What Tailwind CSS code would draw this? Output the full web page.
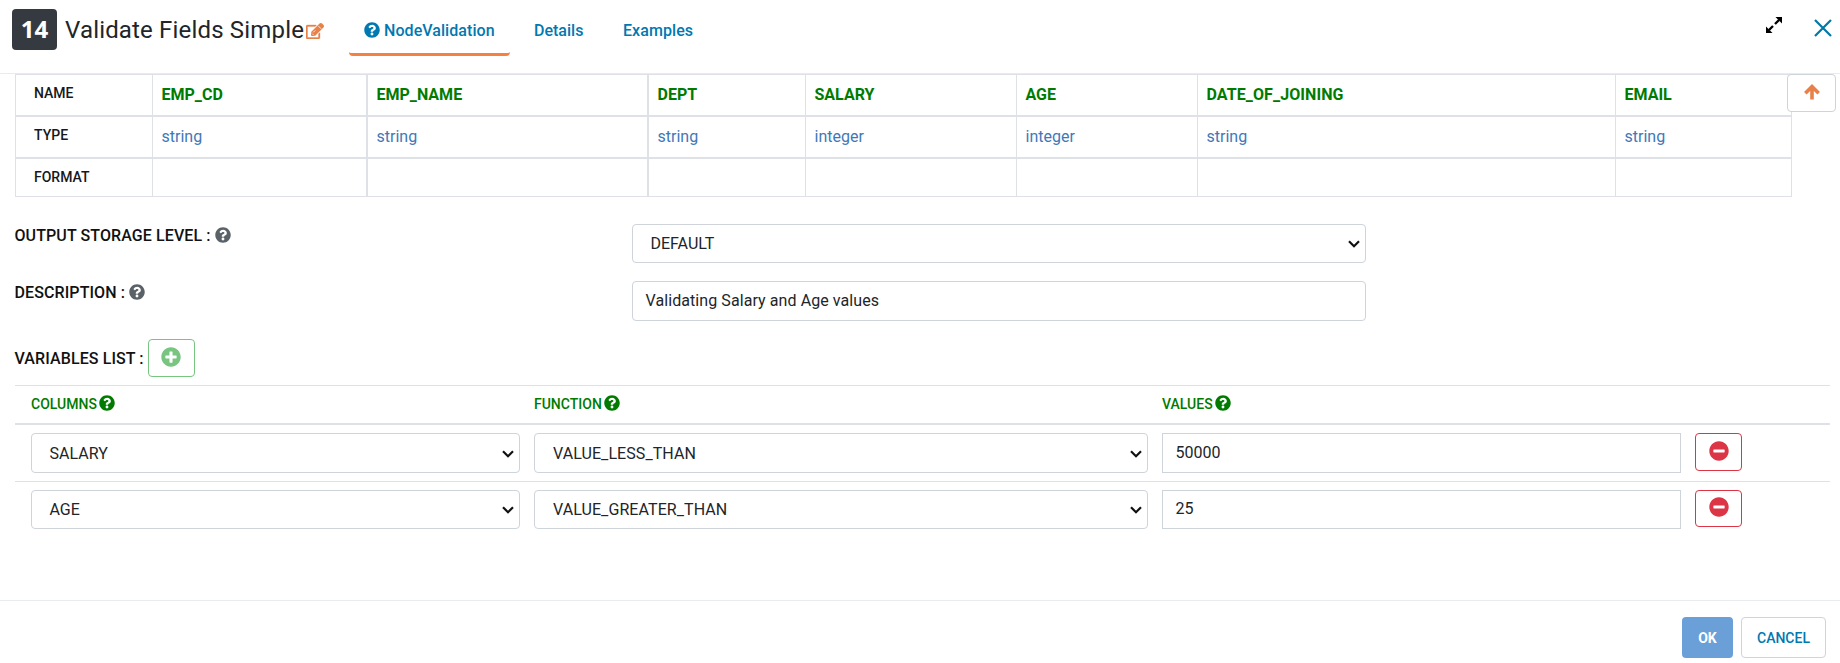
<!DOCTYPE html>
<html lang="en">
<head>
<meta charset="utf-8">
<title>Validate Fields Simple</title>
<script src="https://cdn.jsdelivr.net/npm/@tailwindcss/browser@4"></script>
</head>
<body class="h-[663px] w-[1840px] overflow-hidden bg-white font-[Roboto,sans-serif] text-base text-[#212529]">
<svg class="hidden">
  <symbol id="help" viewBox="0 0 512 512"><path fill="currentColor" d="M504 256c0 137-111 248-248 248S8 393 8 256 119 8 256 8s248 111 248 248zM262.700 90c-54.500 0-89.300 23-116.500 63.800-3.500 5.300-2.400 12.400 2.700 16.300l34.700 26.300c5.200 3.900 12.600 3 16.700-2.100 17.900-22.700 30.100-35.800 57.300-35.800 20.400 0 45.700 13.100 45.700 33 0 15-12.400 22.700-32.500 34C247.100 238.500 216 254.900 216 296v4c0 6.600 5.400 12 12 12h56c6.600 0 12-5.400 12-12v-1.300c0-28.500 83.200-29.600 83.200-106.700 0-58-60.200-102-116.500-102zM256 338c-25.400 0-46 20.600-46 46s20.600 46 46 46 46-20.600 46-46-20.600-46-46-46z"/></symbol>
  <symbol id="minus" viewBox="0 0 512 512"><path fill="currentColor" d="M256 8C119 8 8 119 8 256s111 248 248 248 248-111 248-248S393 8 256 8zM124 296c-6.600 0-12-5.400-12-12v-56c0-6.600 5.400-12 12-12h264c6.600 0 12 5.400 12 12v56c0 6.600-5.400 12-12 12H124z"/></symbol>
  <symbol id="plus" viewBox="0 0 512 512"><path fill="currentColor" d="M256 8C119 8 8 119 8 256s111 248 248 248 248-111 248-248S393 8 256 8zm144 276c0 6.600-5.400 12-12 12h-92v92c0 6.600-5.400 12-12 12h-56c-6.600 0-12-5.400-12-12v-92h-92c-6.600 0-12-5.400-12-12v-56c0-6.600 5.400-12 12-12h92v-92c0-6.600 5.400-12 12-12h56c6.600 0 12 5.400 12 12v92h92c6.600 0 12 5.400 12 12v56z"/></symbol>
  <symbol id="chev" viewBox="0 0 12 8"><path d="M1 1.200 6 6.200 11 1.200" fill="none" stroke="#111" stroke-width="2.200"/></symbol>
</svg>

<header class="flex h-[74px] items-start border-b border-[#e9ecef]">
  <div class="mt-[9px] ml-3 flex h-[41px] w-[45px] items-center justify-center rounded bg-[#343a40] pb-0.5 font-['Open_Sans',sans-serif] text-2xl font-bold text-white">14</div>
  <h1 class="mt-3 ml-2 w-[241px] text-2xl leading-[37px] whitespace-nowrap tracking-[0.17px]">Validate Fields Simple</h1>
  <svg class="mt-[23px] h-4 w-[18px] text-[#e8804a]" viewBox="0 0 576 512"><path fill="currentColor" stroke="currentColor" stroke-width="12" d="M402.300 344.900l32-32c5-5 13.700-1.500 13.700 5.700V464c0 26.500-21.500 48-48 48H48c-26.500 0-48-21.500-48-48V112c0-26.500 21.500-48 48-48h273.500c7.100 0 10.700 8.600 5.700 13.700l-32 32c-1.500 1.500-3.500 2.300-5.700 2.300H48v352h352V350.500c0-2.100.8-4.100 2.300-5.600z"/><path fill="currentColor" d="M558.900 143.100L296.300 405.700l-90.400 10c-26.200 2.900-48.500-19.200-45.600-45.600l10-90.400L432.900 17.100c22.900-22.900 59.900-22.900 82.700 0l43.200 43.200c22.900 22.900 22.900 60 .1 82.800z"/><path d="M392 92l92 92M232 300l62-62M200 340l36 36" stroke="#fff" stroke-width="26"/></svg>
  <nav class="ml-[25px] flex font-medium text-[#0079b0]">
    <a class="flex h-14 w-[161px] items-start rounded-sm border-b-3 border-[#f58040] pt-[19px] pl-[15px] tracking-[0.06px]"><svg class="mt-[3px] mr-1 h-4 w-4"><use href="#help"/></svg>NodeValidation</a>
    <a class="mt-[19px] ml-6 w-[89px]">Details</a>
    <a class="mt-[19px] tracking-[0.08px]">Examples</a>
  </nav>
  <svg class="mt-[17px] ml-auto h-4 w-4" viewBox="0 0 16 16" fill="none" stroke="#000" stroke-width="2.400"><path d="M9 7 13 3M7 9 3 13"/><path fill="#000" stroke="none" d="M9.500 0H16v6.500zM0 9.500V16h6.500z"/></svg>
  <svg class="mt-[19px] mr-2 ml-8 h-[18px] w-[18px]" viewBox="0 0 18 18" fill="none" stroke="#0078a8" stroke-width="2.200"><path d="M1 1 17 17M17 1 1 17"/></svg>
</header>

<main class="relative h-[526px]">
  <table class="ml-[15px] w-[1777px] table-fixed border-separate border-spacing-0 border-t border-l border-[#dee2e6]">
    <colgroup><col class="w-[137px]"><col class="w-[215px]"><col class="w-[281px]"><col class="w-[157px]"><col class="w-[211px]"><col class="w-[181px]"><col class="w-[418px]"><col class="w-[176px]"></colgroup>
    <tr class="h-[42px] text-left text-[#007b00] *:border-r *:border-b-2 *:border-[#dee2e6] *:p-0 *:pl-[8.5px] *:font-bold">
      <th class="text-sm text-[#16181b]"><div class="-mt-1 pl-[9.5px] font-medium">NAME</div></th><th class="border-r-2!">EMP_CD</th><th class="border-r-2!">EMP_NAME</th><th>DEPT</th><th>SALARY</th><th>AGE</th><th><span class="tracking-[0.08px]">DATE_OF_JOINING</span></th><th>EMAIL</th>
    </tr>
    <tr class="h-[42px] text-left text-[#3f78b8] *:border-r *:border-b-2 *:border-[#dee2e6] *:p-0 *:pl-[8.5px]">
      <th class="text-sm text-[#16181b]"><div class="-mt-1 pl-[9.5px] font-medium">TYPE</div></th><td class="border-r-2!">string</td><td class="border-r-2!">string</td><td>string</td><td>integer</td><td>integer</td><td>string</td><td>string</td>
    </tr>
    <tr class="h-[38px] text-left *:border-r *:border-b *:border-[#dee2e6] *:p-0 *:pl-[8.5px]">
      <th class="text-sm text-[#16181b]"><div class="-mt-0.5 pl-[9.5px] font-medium">FORMAT</div></th><td class="border-r-2!"></td><td class="border-r-2!"></td><td></td><td></td><td></td><td></td><td></td>
    </tr>
  </table>
  <button class="absolute top-0 right-1 flex h-[38px] w-[49px] items-center justify-center rounded border border-[#ced4da] bg-white"><svg class="-mt-0.5 h-4 w-4" viewBox="0 0 16 16" fill="none" stroke="#e8804a" stroke-width="3.600"><path d="M8 15.500V3M1.300 9.200 8 2.600 14.700 9.200"/></svg></button>

  <section class="mt-[27px] ml-[15px]">
    <div class="flex h-[57px]">
      <label class="-ml-[0.5px] flex w-[617.5px] gap-1 font-medium tracking-[0.1px] text-[#111]">OUTPUT STORAGE LEVEL :<svg class="mt-[3px] h-4 w-4 text-[#5a6268]"><use href="#help"/></svg></label>
      <div class="flex h-[39px] w-[734px] items-center justify-between rounded border border-[#ced4da] pr-[5px] pl-[17.5px]">DEFAULT<svg class="h-2 w-3"><use href="#chev"/></svg></div>
    </div>
    <div class="flex h-[58px]">
      <label class="-ml-[0.5px] flex w-[617.5px] gap-1 font-medium tracking-[0.1px] text-[#111]">DESCRIPTION :<svg class="mt-[3px] h-4 w-4 text-[#5a6268]"><use href="#help"/></svg></label>
      <div class="flex h-10 w-[734px] items-center rounded border border-[#ced4da] pl-[12.5px] tracking-[0.08px]">Validating Salary and Age values</div>
    </div>
    <div class="flex h-[46px] items-start gap-1 font-medium">
      <span class="mt-2 -ml-[0.5px] tracking-[0.1px] text-[#111]">VARIABLES LIST :</span>
      <button class="flex h-[38px] w-[47px] items-center justify-center rounded border border-[#78c580] text-[#78c580]"><svg class="-mt-0.5 h-5 w-5"><use href="#plus"/></svg></button>
    </div>
    <div class="w-[1815px] border-t border-[#dee2e6]">
      <div class="flex h-[39px] border-b-2 border-[#dee2e6] pt-2 pl-4 text-sm leading-[20px] font-medium text-[#007b00]">
        <div class="flex w-[503px] gap-[2.5px]"><span>COLUMNS</span><svg class="mt-px h-4 w-4"><use href="#help"/></svg></div>
        <div class="flex w-[628px] gap-[2.5px]"><span>FUNCTION</span><svg class="mt-px h-4 w-4"><use href="#help"/></svg></div>
        <div class="flex gap-[2.5px]"><span>VALUES</span><svg class="mt-px h-4 w-4"><use href="#help"/></svg></div>
      </div>
      <div class="flex h-[57px] gap-[14px] border-b border-[#dee2e6] pt-2 pl-4">
        <div class="flex h-10 w-[489px] items-center justify-between rounded border border-[#ced4da] pt-px pr-[5px] pl-[17.5px]">SALARY<svg class="h-2 w-3"><use href="#chev"/></svg></div>
        <div class="flex h-10 w-[614px] items-center justify-between rounded border border-[#ced4da] pt-px pr-[5px] pl-[18px] tracking-[0.08px]">VALUE_LESS_THAN<svg class="h-2 w-3"><use href="#chev"/></svg></div>
        <div class="flex h-10 w-[519px] items-center border border-[#ced4da] pl-[12.5px]">50000</div>
        <button class="flex h-[38px] w-[47px] items-center justify-center rounded border border-[#dc3545] text-[#dc3545]"><svg class="-mt-0.5 h-5 w-5"><use href="#minus"/></svg></button>
      </div>
      <div class="flex h-[57px] gap-[14px] pt-2 pl-4">
        <div class="flex h-[39px] w-[489px] items-center justify-between rounded border border-[#ced4da] pr-[5px] pl-[17.5px]">AGE<svg class="h-2 w-3"><use href="#chev"/></svg></div>
        <div class="flex h-[39px] w-[614px] items-center justify-between rounded border border-[#ced4da] pr-[5px] pl-[18px] tracking-[0.08px]">VALUE_GREATER_THAN<svg class="h-2 w-3"><use href="#chev"/></svg></div>
        <div class="flex h-[39px] w-[519px] items-center border border-[#ced4da] pb-0.5 pl-[12.5px]">25</div>
        <button class="flex h-[37px] w-[47px] items-center justify-center rounded border border-[#dc3545] text-[#dc3545]"><svg class="-mt-1 h-5 w-5"><use href="#minus"/></svg></button>
      </div>
    </div>
  </section>
</main>

<footer class="flex h-[63px] justify-end gap-2 border-t border-[#e9ecef] pt-4 pr-[14px] text-sm font-medium">
  <button class="h-[41px] w-[51px] rounded bg-[#6a9fd8] font-bold text-white">OK</button>
  <button class="h-[41px] w-[85px] rounded border border-[#ced4da] text-[#0079b0]">CANCEL</button>
</footer>
</body>
</html>
